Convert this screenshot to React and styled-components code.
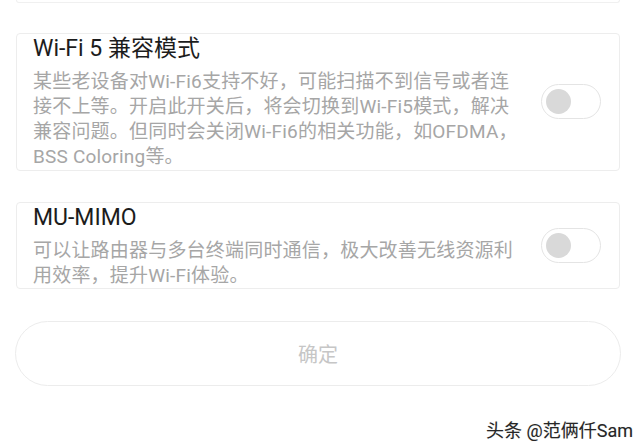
import React from "react";
import styled, { createGlobalStyle } from "styled-components";

const Global = createGlobalStyle`
  html, body { margin: 0; padding: 0; background: #ffffff; }
  body { font-family: Roboto, "Noto Sans CJK SC", sans-serif; }
`;

const Page = styled.div`
  width: 637px;
  height: 448px;
  overflow: hidden;
  display: flex;
  flex-direction: column;
  padding: 0 17px 0 16px;
  box-sizing: border-box;
  background: #fff;
`;

const PrevCard = styled.div`
  height: 2px;
  border: 1px solid #f0f0f0;
  border-top: none;
  border-radius: 0 0 4px 4px;
`;

const Card = styled.div`
  margin-top: ${(p) => p.$top}px;
  border: 1px solid #ededed;
  border-radius: 4px;
  padding: 0 18px ${(p) => p.$pb}px 16px;
  display: flex;
  align-items: center;
  gap: 14px;
`;

const Texts = styled.div`
  flex: 1;
  min-width: 0;
`;

const Title = styled.div`
  font-size: 23px;
  line-height: 30px;
  color: #1c1c1c;
  margin-bottom: 5px;
`;

const Desc = styled.div`
  font-size: 19px;
  line-height: 25px;
  color: #a6a6a6;
  white-space: pre-line;
  letter-spacing: 0.2px;
`;

const Switch = styled.div`
  flex: none;
  width: 50px;
  height: 33px;
  border: 1px solid #e4e4e4;
  border-radius: 18px;
  box-sizing: content-box;
  display: flex;
  align-items: center;
  padding: 0 4px;
  background: #fff;
`;

const Knob = styled.div`
  width: 25px;
  height: 25px;
  border-radius: 50%;
  background: #d9d9d9;
`;

const Button = styled.div`
  margin-top: 32px;
  height: 63px;
  border: 1px solid #ececec;
  border-radius: 33px;
  display: flex;
  align-items: center;
  justify-content: center;
  font-size: 20px;
  color: #c6c6c6;
  margin-left: -1px;
  margin-right: -1px;
`;

const Watermark = styled.div`
  margin-top: 34px;
  align-self: flex-end;
  margin-right: -13px;
  font-size: 18px;
  line-height: 22px;
  color: #262626;
  text-shadow: 0 0 1px rgba(0,0,0,0.2);
`;

const Row = ({ top, pb, title, desc }) => (
  <Card $top={top} $pb={pb}>
    <Texts>
      <Title>{title}</Title>
      <Desc>{desc}</Desc>
    </Texts>
    <Switch>
      <Knob />
    </Switch>
  </Card>
);

export default function App() {
  return (
    <>
      <Global />
      <Page>
        <PrevCard />
        <Row
          top={30}
          pb={1}
          title="Wi-Fi 5 兼容模式"
          desc={"某些老设备对Wi-Fi6支持不好，可能扫描不到信号或者连\n接不上等。开启此开关后，将会切换到Wi-Fi5模式，解决\n兼容问题。但同时会关闭Wi-Fi6的相关功能，如OFDMA，\nBSS Coloring等。"}
        />
        <Row
          top={31}
          pb={0}
          title="MU-MIMO"
          desc={"可以让路由器与多台终端同时通信，极大改善无线资源利\n用效率，提升Wi-Fi体验。"}
        />
        <Button>确定</Button>
        <Watermark>头条 @范俩仟Sam</Watermark>
      </Page>
    </>
  );
}
